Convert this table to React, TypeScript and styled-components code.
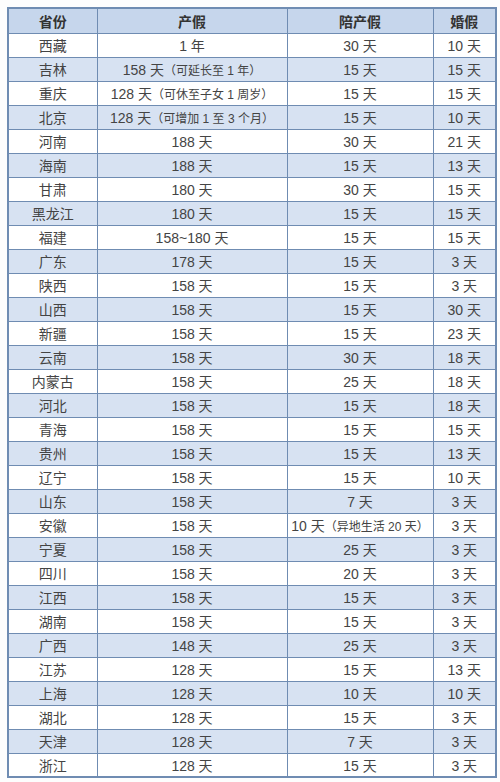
import styled, { createGlobalStyle } from 'styled-components';

const GlobalStyle = createGlobalStyle`
  html, body {
    margin: 0;
    padding: 0;
    background: #fdfdfd;
  }
  body {
    font-family: "Liberation Sans", "Noto Sans CJK SC", sans-serif;
  }
`;

const Page = styled.div`
  padding: 7px 5px 4px 7px;
`;

const Table = styled.table`
  width: 488px;
  table-layout: fixed;
  border-collapse: collapse;
  border-spacing: 0;
  border: 2px solid #6f8cb2;
  color: #444;
  font-size: 14px;
`;

const HeadRow = styled.tr`
  height: 25px;
  background: #c6d6ec;
`;

const HeadCell = styled.th`
  padding: 0;
  border: 1.5px solid #6f8cb2;
  font-weight: 600;
  text-align: center;
  color: #333;
`;

const Row = styled.tr`
  height: 24px;
  background: #ffffff;
  &:nth-child(even) {
    background: #d7e2f2;
  }
`;

const Cell = styled.td`
  padding: 0;
  border: 1.5px solid #6f8cb2;
  text-align: center;
  white-space: nowrap;
`;

const Note = styled.span`
  font-size: 12px;
`;

type Leave = {
  province: string;
  maternity: string;
  maternityNote?: string;
  paternity: string;
  paternityNote?: string;
  marriage: string;
};

const rows: Leave[] = [
  { province: '西藏', maternity: '1 年', paternity: '30 天', marriage: '10 天' },
  { province: '吉林', maternity: '158 天', maternityNote: '（可延长至 1 年）', paternity: '15 天', marriage: '15 天' },
  { province: '重庆', maternity: '128 天', maternityNote: '（可休至子女 1 周岁）', paternity: '15 天', marriage: '15 天' },
  { province: '北京', maternity: '128 天', maternityNote: '（可增加 1 至 3 个月）', paternity: '15 天', marriage: '10 天' },
  { province: '河南', maternity: '188 天', paternity: '30 天', marriage: '21 天' },
  { province: '海南', maternity: '188 天', paternity: '15 天', marriage: '13 天' },
  { province: '甘肃', maternity: '180 天', paternity: '30 天', marriage: '15 天' },
  { province: '黑龙江', maternity: '180 天', paternity: '15 天', marriage: '15 天' },
  { province: '福建', maternity: '158~180 天', paternity: '15 天', marriage: '15 天' },
  { province: '广东', maternity: '178 天', paternity: '15 天', marriage: '3 天' },
  { province: '陕西', maternity: '158 天', paternity: '15 天', marriage: '3 天' },
  { province: '山西', maternity: '158 天', paternity: '15 天', marriage: '30 天' },
  { province: '新疆', maternity: '158 天', paternity: '15 天', marriage: '23 天' },
  { province: '云南', maternity: '158 天', paternity: '30 天', marriage: '18 天' },
  { province: '内蒙古', maternity: '158 天', paternity: '25 天', marriage: '18 天' },
  { province: '河北', maternity: '158 天', paternity: '15 天', marriage: '18 天' },
  { province: '青海', maternity: '158 天', paternity: '15 天', marriage: '15 天' },
  { province: '贵州', maternity: '158 天', paternity: '15 天', marriage: '13 天' },
  { province: '辽宁', maternity: '158 天', paternity: '15 天', marriage: '10 天' },
  { province: '山东', maternity: '158 天', paternity: '7 天', marriage: '3 天' },
  { province: '安徽', maternity: '158 天', paternity: '10 天', paternityNote: '（异地生活 20 天）', marriage: '3 天' },
  { province: '宁夏', maternity: '158 天', paternity: '25 天', marriage: '3 天' },
  { province: '四川', maternity: '158 天', paternity: '20 天', marriage: '3 天' },
  { province: '江西', maternity: '158 天', paternity: '15 天', marriage: '3 天' },
  { province: '湖南', maternity: '158 天', paternity: '15 天', marriage: '3 天' },
  { province: '广西', maternity: '148 天', paternity: '25 天', marriage: '3 天' },
  { province: '江苏', maternity: '128 天', paternity: '15 天', marriage: '13 天' },
  { province: '上海', maternity: '128 天', paternity: '10 天', marriage: '10 天' },
  { province: '湖北', maternity: '128 天', paternity: '15 天', marriage: '3 天' },
  { province: '天津', maternity: '128 天', paternity: '7 天', marriage: '3 天' },
  { province: '浙江', maternity: '128 天', paternity: '15 天', marriage: '3 天' },
];

const App = () => {
  return (
    <Page>
      <GlobalStyle />
      <Table>
        <colgroup>
          <col style={{ width: 89 }} />
          <col style={{ width: 190 }} />
          <col style={{ width: 146 }} />
          <col style={{ width: 63 }} />
        </colgroup>
        <thead>
          <HeadRow>
            <HeadCell>省份</HeadCell>
            <HeadCell>产假</HeadCell>
            <HeadCell>陪产假</HeadCell>
            <HeadCell>婚假</HeadCell>
          </HeadRow>
        </thead>
        <tbody>
          {rows.map((r) => (
            <Row key={r.province}>
              <Cell>{r.province}</Cell>
              <Cell>
                {r.maternity}
                {r.maternityNote && <Note>{r.maternityNote}</Note>}
              </Cell>
              <Cell>
                {r.paternity}
                {r.paternityNote && <Note>{r.paternityNote}</Note>}
              </Cell>
              <Cell>{r.marriage}</Cell>
            </Row>
          ))}
        </tbody>
      </Table>
    </Page>
  );
};

export default App;
